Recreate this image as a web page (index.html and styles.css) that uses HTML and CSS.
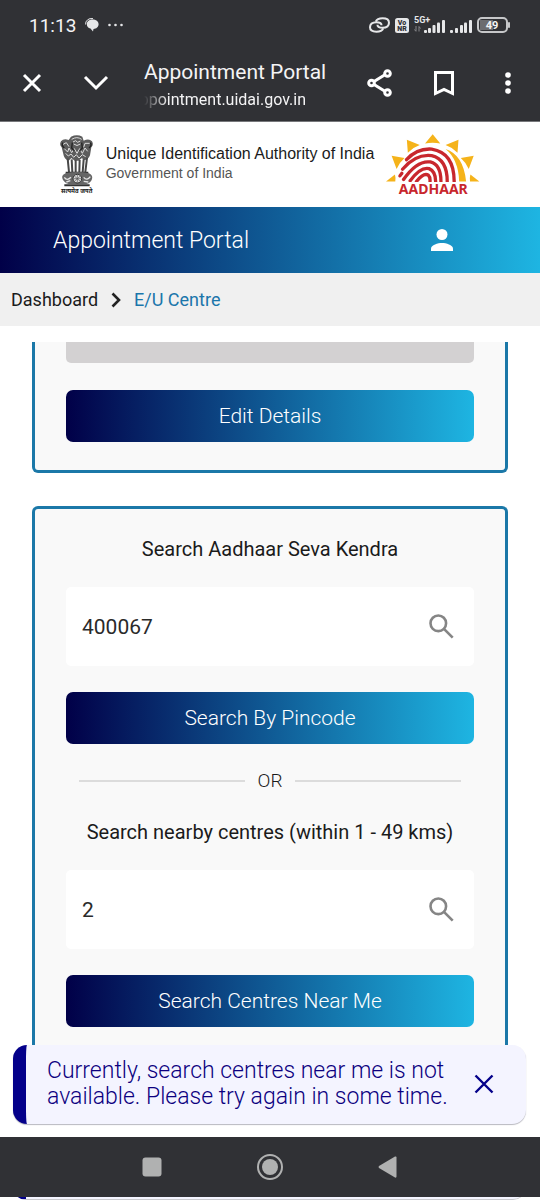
FILE: index.html
```html
<!DOCTYPE html>
<html lang="en">
<head>
  <meta charset="UTF-8" />
  <meta name="viewport" content="width=device-width, initial-scale=1.0" />
  <title>Appointment Portal</title>
  <link rel="stylesheet" href="styles.css">
</head>
<body>
  <div class="browser">
    <div class="status">
      <span class="time">11:13</span>
      <svg width="14" height="14" viewBox="0 0 14 14"><path d="M.6 6.500A6 5.500 0 0 1 8 .6" fill="none" stroke="#e6e7e9"/><path d="M7.500 1.600C11 1.600 13.600 3.500 13.600 6.200S11 11 8.500 10.900L8 13.500 5.500 10.600C3.200 10.200 1.800 8.500 1.800 6.300 1.800 3.500 4.200 1.600 7.500 1.600Z" fill="#e6e7e9"/></svg>
      <svg width="15" height="4" viewBox="0 0 15 4" fill="#e6e7e9"><circle cx="1.500" cy="2" r="1.300"/><circle cx="7.500" cy="2" r="1.300"/><circle cx="13.500" cy="2" r="1.300"/></svg>
      <div class="signals">
        <svg width="21" height="16" viewBox="0 0 62 46" fill="none" stroke="#e6e7e9" stroke-width="6"><path d="M20 13Q24 3 40 3 59 3 59 16 59 31 40 31 25 31 25 22"/><path d="M42 33Q38 43 22 43 3 43 3 30 3 15 22 15 37 15 37 24"/></svg>
        <svg width="14" height="15" viewBox="0 0 14 15"><rect width="14" height="15" rx="2.500" fill="#e6e7e9"/><text class="badge-text" x="7" y="7" text-anchor="middle">Vo</text><text class="badge-text" x="7" y="13" text-anchor="middle">NR</text></svg>
        <svg width="31" height="18" viewBox="0 0 31 18" fill="#e6e7e9"><text class="net-text" x="0" y="7">5G+</text><path d="M2 10v5M0.500 13.500L2 15.500M5 15.500v-5M5 10.500l1.500 2" stroke="#85868a" fill="none"/><rect x="10" y="14" width="3" height="3" rx="1"/><rect x="14" y="12" width="3" height="5" rx="1"/><rect x="18.500" y="9" width="3" height="8" rx="1"/><rect x="23" y="6.500" width="3" height="10.500" rx="1"/><rect x="28" y="4" width="3" height="13" rx="1"/></svg>
        <svg width="22" height="18" viewBox="0 0 22 18" fill="#e6e7e9"><rect x="0" y="14" width="3" height="3" rx="1"/><rect x="5" y="12" width="3" height="5" rx="1"/><rect x="10" y="9" width="3" height="8" rx="1"/><rect x="14" y="6.500" width="3" height="10.500" rx="1"/><rect x="19" y="4" width="3" height="13" rx="1"/></svg>
        <svg width="34" height="16" viewBox="0 0 34 16"><rect x="3" y="3" width="13" height="10" fill="#6c6d70"/><rect x="1" y="1" width="29" height="14" rx="4" fill="none" stroke="#c6c7c9" stroke-width="2"/><rect x="31" y="5" width="2" height="6" rx="1" fill="#c6c7c9"/><text class="battery-text" x="15" y="12" text-anchor="middle">49</text></svg>
      </div>
    </div>
    <div class="toolbar">
      <button class="tool" aria-label="Close"><svg width="20" height="20" viewBox="0 0 20 20"><path d="M2 2l16 16M18 2L2 18"/></svg></button>
      <button class="tool tool-down" aria-label="Minimise"><svg width="26" height="16" viewBox="0 0 26 16"><path d="M2 2l11 11L24 2"/></svg></button>
      <div class="page-title">
        <div class="title">Appointment Portal</div>
        <div class="url"><span>appointment.uidai.gov.in</span></div>
      </div>
      <div class="tools">
        <button class="tool" aria-label="Share"><svg width="26" height="28" viewBox="0 0 26 28"><path d="M7 12.500L17.500 6M7 15.500L17.500 22"/><circle cx="4.500" cy="14" r="2.800"/><circle cx="20.500" cy="4.500" r="2.800"/><circle cx="20.500" cy="23.500" r="2.800"/></svg></button>
        <button class="tool" aria-label="Bookmark"><svg width="20" height="26" viewBox="0 0 20 26"><path d="M1.500 2.500h17v21L10 19.500 1.500 23.500z"/></svg></button>
        <button class="tool" aria-label="More"><svg width="6" height="22" viewBox="0 0 6 22"><g class="dots"><circle cx="3" cy="3" r="2.800"/><circle cx="3" cy="11" r="2.800"/><circle cx="3" cy="19" r="2.800"/></g></svg></button>
      </div>
    </div>
  </div>

  <header class="org">
    <div class="emblem">
      <svg width="34" height="52" viewBox="60 37 100 156">
        <path d="M92 42q18-8 34 0l4 12q16-8 25 2 6 10-2 18l-4 24q-6 16-20 14l-4-6-10 8h-12l-10-8-8 8q-14-4-16-20l-5-20q-8-8-2-18 8-10 23-4z" fill="#5c5c5c"/>
        <path d="M94 50q16-10 30 0M98 58l8-4 6 5 8-4M100 64q10 9 20 0M66 66l12-6 8 12M148 62l-14 0-4 12M72 78l10 10 4-12 8 14 8-12 8 14 8-14 8 14 8-16 8 10M76 92l8 8 8-6 8 10 8-8 8 10 10-10 10 6" fill="none" stroke="#dcdcdc" stroke-width="3"/>
        <path d="M96 60l-2 16 8 8M124 60l2 16-8 8M68 60q-6 8 4 16M150 60q6 8-4 16" fill="none" stroke="#222" stroke-width="4"/>
        <path d="M82 108l4 40M94 110l2 38M106 112v36M118 112l-1 36M130 110l-3 38M140 106l-5 42" stroke="#484848" stroke-width="6"/>
        <path d="M76 150h68M72 188h76" stroke="#333" stroke-width="6"/>
        <path d="M76 152q-16 6-8 20 8 12 24 14h38q18-2 24-14 6-14-8-20-34-8-70 0z" fill="#666"/>
        <path d="M72 164q8 12 20 0M130 164q10 12 20-2M78 178l12-4M130 176l14 2" fill="none" stroke="#e5e5e5" stroke-width="4"/>
        <circle cx="111" cy="168" r="13" fill="#ddd" stroke="#333" stroke-width="3"/>
        <path d="M111 156v24M99 168h24M102 160l18 16M120 160l-18 16" stroke="#555" stroke-width="2"/>
      </svg>
      <span class="motto" lang="hi">सत्यमेव जयते</span>
    </div>
    <div class="org-name">
      <div class="authority">Unique Identification Authority of India</div>
      <div class="govt">Government of India</div>
    </div>
    <div class="aadhaar">
      <svg width="94" height="48" viewBox="46 32 284 144">
        <g fill="#f5b31a">
          <path d="M187 32l23 28q-23-4-46 0z"/>
          <path d="M109 49l39 16q-20 7-36 23z"/>
          <path d="M265 49l-39 16q20 7 36 23z"/>
          <path d="M63 97l39 7q-14 12-24 33z"/>
          <path d="M311 97l-39 7q14 12 24 33z"/>
          <path d="M46 175l27-21q3 10 1 21z"/>
          <path d="M328 175l-27-21q-3 10-1 21z"/>
          <path d="M226 77q54 18 62 98h-21q-2-66-41-98z"/>
        </g>
        <g class="print">
          <path d="M108 109Q140 74 184 77 252 88 252 175"/>
          <path d="M96 138Q136 91 184 97 231 108 231 175"/>
          <path d="M88 158l6-8"/>
          <path d="M99 169Q140 110 180 116 212 124 212 175"/>
          <path d="M119 173Q150 130 176 136 196 144 196 175"/>
          <path d="M138 175Q160 147 174 156 180 162 179 175"/>
        </g>
      </svg>
      <span class="aadhaar-name">AADHAAR</span>
    </div>
  </header>

  <div class="banner">
    <span>Appointment Portal</span>
    <button class="profile" aria-label="Profile"><svg width="22" height="22" viewBox="0 0 22 22" fill="#fff"><circle cx="11" cy="5.500" r="5.500"/><path d="M0 22v-2.500C0 16 7 14 11 14s11 2 11 5.500V22z"/></svg></button>
  </div>

  <nav class="crumbs">
    <a class="crumb" href="#">Dashboard</a>
    <svg width="10" height="16" viewBox="0 0 10 16"><path d="M1.500 1.500L8 8l-6.500 6.500" fill="none" stroke="#222" stroke-width="2.600"/></svg>
    <a class="crumb current" href="#">E/U Centre</a>
  </nav>

  <main>
    <section class="card card-details">
      <div class="disabled-field"></div>
      <button class="btn">Edit Details</button>
    </section>

    <section class="card card-search">
      <label class="heading" for="pincode">Search Aadhaar Seva Kendra</label>
      <div class="field">
        <input type="text" id="pincode" value="400067" />
        <svg class="lens" width="25" height="25" viewBox="0 0 25 25"><circle cx="9.300" cy="9.300" r="7.800"/><path d="M15.200 15.200l8.500 8.500"/></svg>
      </div>
      <button class="btn">Search By Pincode</button>
      <div class="or">OR</div>
      <label class="heading" for="distance">Search nearby centres (within 1 - 49 kms)</label>
      <div class="field">
        <input type="text" id="distance" value="2" />
        <svg class="lens" width="25" height="25" viewBox="0 0 25 25"><circle cx="9.300" cy="9.300" r="7.800"/><path d="M15.200 15.200l8.500 8.500"/></svg>
      </div>
      <button class="btn">Search Centres Near Me</button>
    </section>
  </main>

  <div class="toast" role="alert">
    <p>Currently, search centres near me is not available. Please try again in some time.</p>
    <button class="toast-close" aria-label="Dismiss"><svg width="20" height="20" viewBox="0 0 20 20"><path d="M1.500 1.500l17 17M18.500 1.500l-17 17" stroke="#04008a" stroke-width="2.400"/></svg></button>
  </div>

  <div class="phone-nav">
    <button class="tool" aria-label="Recent apps"><svg width="20" height="20" viewBox="0 0 20 20"><rect class="solid" x=".5" y=".5" width="19" height="19" rx="3"/></svg></button>
    <button class="tool" aria-label="Home"><svg width="26" height="26" viewBox="0 0 26 26"><circle class="ring" cx="13" cy="13" r="12"/><circle class="solid" cx="13" cy="13" r="8"/></svg></button>
    <button class="tool" aria-label="Back"><svg width="20" height="22" viewBox="0 0 20 22"><path class="solid" d="M1 10L17 .5q1.500-.5 1.500 1v19q0 1.500-1.500 1L1 12q-1-1 0-2z"/></svg></button>
  </div>
  <div class="under"><div class="toast-edge"></div></div>
</body>
</html>
```
FILE: styles.css
```css
* { box-sizing: border-box; }
body { margin: 0; min-height: 100vh; display: flex; flex-direction: column; font-family: Roboto, "Liberation Sans", sans-serif; background: #fff; color: #1b1b1b; }
button { border: 0; padding: 0; background: none; font-family: inherit; cursor: pointer; }
svg { display: block; flex: none; }

.browser { background: #303135; color: #f4f4f5; border-bottom: 1px solid #77787b; }
.status { display: flex; align-items: center; gap: 9px; height: 50px; padding: 0 29px; }
.time { font-size: 19px; }
.signals { display: flex; align-items: center; gap: 5px; margin-left: auto; }
.badge-text { font-size: 7px; font-weight: 900; fill: #303135; }
.net-text { font-size: 9px; font-weight: 700; }
.battery-text { font-size: 11px; font-weight: 700; fill: #f4f4f5; }

.toolbar { display: flex; align-items: center; height: 71px; padding: 0 19px 5px 22px; }
.tool { display: flex; align-items: center; justify-content: center; }
.tool svg { fill: none; stroke: #fff; stroke-width: 3; }
.tool .dots { fill: #fff; stroke: none; }
.tool-down { margin: 0 35px 0 41px; }
.page-title { padding-top: 6px; }
.title { font-size: 21px; line-height: 28px; }
.url { display: flex; justify-content: flex-end; width: 162px; overflow: hidden; font-size: 16px; line-height: 28px; -webkit-mask-image: linear-gradient(90deg, transparent, #000 24px); mask-image: linear-gradient(90deg, transparent, #000 24px); }
.tools { display: flex; align-items: center; gap: 38px; margin-left: auto; }
.tools .tool { width: 26px; }

.org { display: flex; align-items: center; justify-content: center; height: 85px; }
.emblem { display: flex; flex-direction: column; align-items: center; width: 34px; margin-right: 12px; }
.motto { font-family: "Noto Sans", sans-serif; font-size: 6px; line-height: 8px; font-weight: 700; white-space: nowrap; }
.org-name { padding-bottom: 3px; font-family: "Liberation Sans", Arial, sans-serif; white-space: nowrap; }
.authority { font-size: 16px; line-height: 20px; }
.govt { font-size: 14px; line-height: 18px; color: #555; }
.aadhaar { display: flex; flex-direction: column; align-items: center; margin-left: 12px; }
.aadhaar .print { fill: none; stroke: #c8272d; stroke-width: 10; stroke-linecap: round; }
.aadhaar-name { font-family: "Noto Sans", sans-serif; font-size: 14px; line-height: 14px; font-weight: 700; color: #c8272d; }

.banner, .btn { background: linear-gradient(90deg, #010048, #1eb5e2); color: #fff; font-weight: 300; }
.banner { display: flex; align-items: center; justify-content: space-between; height: 66px; padding: 0 87px 0 53px; font-size: 23px; }

.crumbs { display: flex; align-items: center; gap: 13px; height: 53px; padding: 0 11px; background: #f0f0f0; font-size: 18px; }
.crumb { color: #1b1b1b; text-decoration: none; }
.crumb.current { color: #1b76ab; }

main { flex: 1; padding: 16px 32px 0; display: flex; flex-direction: column; gap: 33px; }
.card { display: flex; flex-direction: column; padding: 28px 31px; border: 3px solid #1b78a8; border-radius: 6px; background: #f9f9f9; }
.card-details { padding-top: 0; border-top: 0; border-top-left-radius: 0; border-top-right-radius: 0; }
.card-search { flex: 1; padding-bottom: 18px; border-bottom: 0; border-bottom-left-radius: 0; border-bottom-right-radius: 0; }
.disabled-field { height: 21px; margin-bottom: 27px; border-radius: 0 0 5px 5px; background: #d3d1d2; }
.btn { height: 52px; border-radius: 7px; font-size: 21px; }
.heading { font-size: 20px; line-height: 24px; text-align: center; }
.field { display: flex; align-items: center; height: 79px; margin: 26px 0; padding: 0 20px 0 16px; border-radius: 5px; background: #fff; }
.field input { flex: 1; min-width: 0; border: 0; padding: 0; outline: 0; background: none; font-family: inherit; font-size: 21px; color: #2a2a2a; }
.lens { fill: none; stroke: #858585; stroke-width: 2.6; }
.or { display: flex; align-items: center; gap: 13px; margin: 25px 13px 27px; font-size: 19px; line-height: 24px; font-weight: 300; }
.or::before, .or::after { content: ""; flex: 1; height: 2px; background: #dcdcdc; }

.toast { display: flex; align-items: center; justify-content: space-between; min-height: 79px; margin: 0 14px 13px 13px; padding: 0 32px 2px 21px; border-left: 13px solid #04008a; border-radius: 14px; background: #f4f4ff; box-shadow: 0 1px 1px #b9b9c0; color: #0c0080; }
.toast p { max-width: 410px; margin: 0; font-size: 23px; line-height: 26px; font-weight: 300; }

.phone-nav { display: flex; align-items: center; justify-content: center; gap: 95px; height: 60px; background: #303135; }
.phone-nav .solid { fill: #b0b1b1; stroke: none; }
.phone-nav .ring { stroke: #b0b1b1; stroke-width: 2; }
.under { height: 3px; overflow: hidden; display: flex; align-items: flex-end; }
.toast-edge { flex: 1; height: 26px; margin: 0 14px 0 13px; border-left: 13px solid #04008a; border-bottom: 1px solid #c9c9ce; border-radius: 14px; background: #f4f4ff; }
```
